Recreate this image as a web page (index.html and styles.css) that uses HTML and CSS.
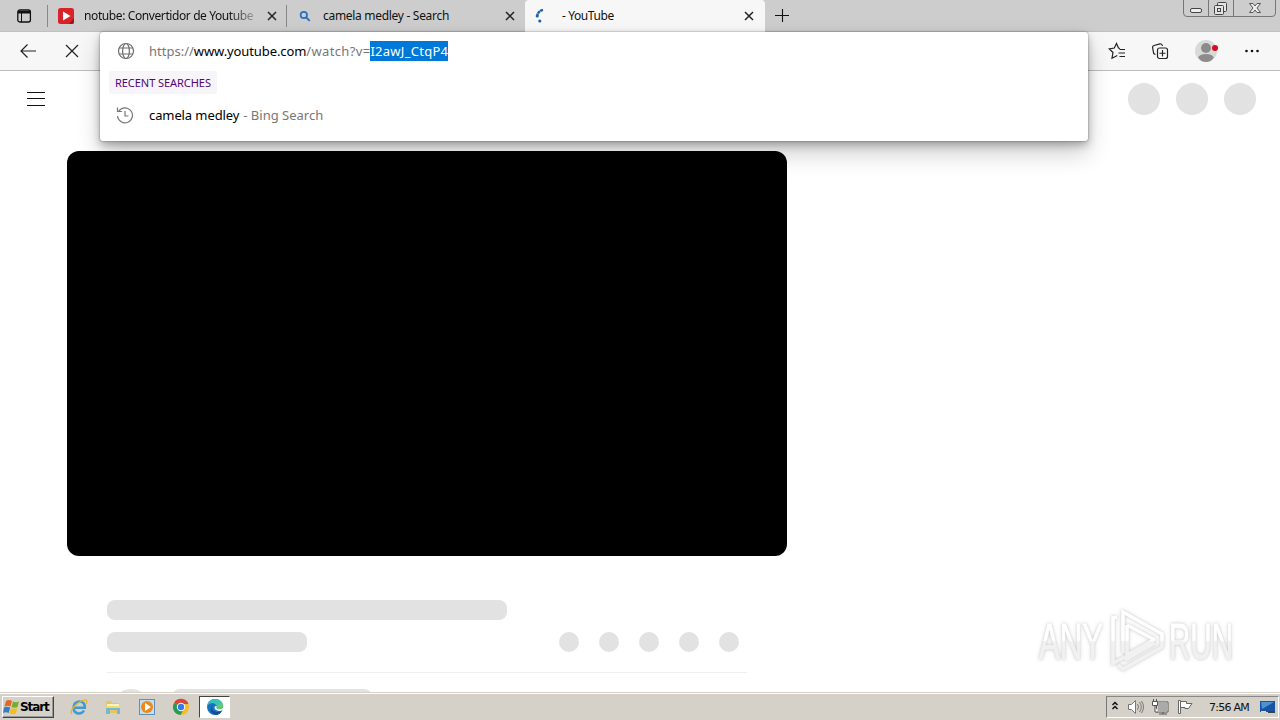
FILE: index.html
```html
<!DOCTYPE html>
<html lang="en">
<head>
<meta charset="utf-8">
<title>YouTube</title>
<link rel="stylesheet" href="styles.css">
</head>
<body>
<div class="screen">
  <header class="tabs">
    <div class="tab-menu"><svg width="16" height="16" viewBox="0 0 16 16"><rect x="1.800" y="2" width="12.600" height="12" rx="2" fill="none" stroke="#111" stroke-width="1.300"/><path d="M2 3h12v2.500H2z" fill="#111"/><path d="M5.500 5v9" stroke="#111"/></svg></div>
    <div class="tab tab-first">
      <svg class="fav" width="16" height="16" viewBox="0 0 16 16"><rect width="16" height="16" rx="2.500" fill="#d9232a"/><path d="M11 16L16 10V14Q16 16 14 16z" fill="#a3131a"/><path d="M5 3.500l7.500 4.500L5 12.500z" fill="#fff"/></svg>
      <span class="title title-fade">notube: Convertidor de Youtube</span>
      <svg class="close" width="10" height="10" viewBox="0 0 10 10"><path d="M1 1l8 8M9 1L1 9"/></svg>
    </div>
    <div class="tab tab-second">
      <svg class="fav" width="16" height="16" viewBox="0 0 16 16"><circle cx="6.800" cy="7" r="3.200" fill="none" stroke="#2870bd" stroke-width="1.700"/><path d="M9.200 9.400l3.500 3.500" stroke="#2870bd" stroke-width="2"/></svg>
      <span class="title title-search">camela medley - Search</span>
      <svg class="close" width="10" height="10" viewBox="0 0 10 10"><path d="M1 1l8 8M9 1L1 9"/></svg>
    </div>
    <div class="tab tab-active">
      <svg class="fav" width="16" height="16" viewBox="0 0 16 16"><path d="M11 1.800Q6 3 5 8.500" fill="none" stroke="#24609f" stroke-width="2.400" stroke-dasharray="3 .4"/><circle cx="5.200" cy="8" r="1.500" fill="#24609f"/><circle cx="7.800" cy="13" r="1.600" fill="#24609f"/></svg>
      <span class="title title-yt">- YouTube</span>
      <svg class="close" width="10" height="10" viewBox="0 0 10 10"><path d="M1 1l8 8M9 1L1 9"/></svg>
    </div>
    <svg class="new-tab" width="16" height="16" viewBox="0 0 16 16"><path d="M1 7.500h14M8.500 1v13" stroke="#111" stroke-width="1.100"/></svg>
    <svg class="window-controls" width="94" height="18" viewBox="0 0 94 18"><path d="M.5 0v13q0 3.500 3.500 3.500h85q3.500 0 3.500-3.500V0M25.500 0v16M50.500 0v16" fill="none" stroke="#777"/><rect x="7.500" y="8.500" width="11" height="4" rx="1.500" fill="#eee" stroke="#444"/><g fill="#e4e4e4" stroke="#444"><rect x="34.500" y="2.500" width="9" height="9" rx="1"/><rect x="31.500" y="5.500" width="9" height="9" rx="1"/><rect x="34.500" y="8.500" width="3" height="3"/></g><path d="M66.500 3.500h3.500l2 2.500 2-2.500h3.500L74 8l3.500 4.500H74L72 10l-2 2.500h-3.500L70 8z" fill="#eee" stroke="#555"/></svg>
  </header>

  <nav class="toolbar">
    <svg class="back" width="18" height="16" viewBox="0 0 18 16"><path d="M17 8H2M8.500 1.500L2 8l6.500 6.500"/></svg>
    <svg class="stop" width="14" height="14" viewBox="0 0 14 14"><path d="M1 1l12 12M13 1L1 13"/></svg>
    <div class="tools">
      <svg width="18" height="18" viewBox="0 0 18 18"><path d="M12 6.500L10.500 6 8.500 1.500 6.300 6 1.200 6.800 5 10.500 4 16.200 9.300 13.500M11.500 7.500H17M10.500 11H17M11.500 14.500H17"/></svg>
      <svg width="18" height="18" viewBox="0 0 18 18"><path d="M4.500 12.500L2.700 11.500 1.600 5.500Q1.300 4 3 3.500L9 1.800Q11 1.500 11.500 4"/><rect x="6.500" y="6" width="10" height="10.500" rx="2"/><path d="M11.500 8v6.500M8.500 11.250h6"/></svg>
      <svg class="avatar" width="24" height="24" viewBox="0 0 24 24"><circle cx="11" cy="12" r="11" fill="#d7dad6"/><circle cx="11" cy="9" r="5" fill="#8c8c8c"/><path d="M3.200 18.500Q4.500 15 11 15t7.800 3.500Q16 23 11 23t-7.800-4.500z" fill="#8c8c8c"/><circle cx="20" cy="9" r="3" fill="#d80c1c"/></svg>
      <svg class="more" width="16" height="6" viewBox="0 0 16 6"><g fill="#111"><circle cx="2.500" cy="3" r="1.300"/><circle cx="8" cy="3" r="1.300"/><circle cx="13.500" cy="3" r="1.300"/></g></svg>
    </div>
  </nav>

  <main class="page">
    <div class="masthead">
      <div class="burger"><i></i><i></i><i></i></div>
      <div class="account"><i></i><i></i><i></i></div>
    </div>
    <div class="video"></div>
    <section class="details">
      <div class="bar bar-title"></div>
      <div class="meta"><div class="bar bar-views"></div><div class="actions"><i></i><i></i><i></i><i></i><i></i></div></div>
      <div class="owner"><i class="owner-pic"></i><i class="owner-name"></i></div>
    </section>
    <svg class="watermark" width="240" height="80" viewBox="0 0 240 80">
      <defs><linearGradient id="fade" gradientUnits="userSpaceOnUse" x1="0" y1="0" x2="0" y2="76"><stop offset="0" stop-color="#fff"/><stop offset=".49" stop-color="#fff"/><stop offset=".51" stop-color="#f1f1f1"/><stop offset="1" stop-color="#f1f1f1"/></linearGradient></defs>
      <g class="mark-text"><text x="8" y="56" textLength="64" lengthAdjust="spacingAndGlyphs">ANY</text><text x="138" y="56" textLength="64" lengthAdjust="spacingAndGlyphs">RUN</text></g>
      <g class="mark-logo"><path d="M86 14L82 15V60l12-6M92 50V9L131 31v5M96 22l28 15M96 22v30l28-16M94 57l30-17M87 62l5 4 39-22V34"/></g>
    </svg>
  </main>

  <footer class="taskbar">
    <div class="start"><svg width="17" height="16" viewBox="0 0 17 16"><path d="M3 2Q6 0 9 2L7.500 7.500Q5 6 1.500 7.500z" fill="#e86524"/><path d="M10 2.500q3 1.500 6 0L14.500 8q-3 1.500-6 0z" fill="#72ae32"/><path d="M1 8.500q3-1.500 6.200 0L5.700 14Q3 12.500 0 14z" fill="#357ec6"/><path d="M8.200 9q3 1.500 6.200 0L13 14.500q-3 1.500-6.500 0z" fill="#f5bd20"/></svg><b>Start</b></div>
    <div class="apps">
      <svg width="18" height="18" viewBox="0 0 18 18"><path d="M14 12.500Q12 16 8 15.500 3.200 14.500 3.500 9.300 4 4 9.300 3.500 15 3.700 14.800 9.800H4" fill="none" stroke="#3e9bd5" stroke-width="2.500"/><path d="M2 16Q-1 13 6 7T16 2q1.500 1 0 4" fill="none" stroke="#e9b72e" stroke-width="1.400"/></svg>
      <svg width="18" height="18" viewBox="0 0 18 18"><path d="M2 3h5l1 2h7v10H2z" fill="#e4c567"/><path d="M3 6h12v5H3z" fill="#fff3b6"/><path d="M2 8h14v8h-3v-4H6v4H2z" fill="#76b9cf"/><path d="M2 8h14v2H2z" fill="#f3d77b"/></svg>
      <svg width="18" height="18" viewBox="0 0 18 18"><rect x="1.500" y="1.500" width="15" height="15" fill="#c2def1" stroke="#5b91bb"/><circle cx="9" cy="9" r="6" fill="#ef8719"/><path d="M7 5l6 4-6 4z" fill="#fff"/></svg>
      <svg width="18" height="18" viewBox="0 0 18 18"><circle cx="9" cy="9" r="8" fill="#f1be2d"/><path d="M9 9L2 5A8 8 0 0 1 16.500 6H9z" fill="#db4437"/><path d="M2 5A8 8 0 0 0 8.500 17L12 11 9 9z" fill="#289b56"/><circle cx="9" cy="9" r="4.200" fill="#fff"/><circle cx="9" cy="9" r="3.200" fill="#367be8"/></svg>
      <div class="app-active"><svg width="18" height="18" viewBox="0 0 18 18"><circle cx="9" cy="9" r="8" fill="#1672bd"/><path d="M1.200 8Q3 1 9 1q7.500.5 8 7-.5 4-5 3-2-.5-1-2.500Q10 5.500 7 5 3 5 1.200 8z" fill="#36c3bd"/><path d="M10 1q7 1 7 7-.5 4-5 3-2-.5-1-2.500L16 4z" fill="#67c96b"/><path d="M6 7q-2 6 5 7 3 0 5-1.500-1.500 4-6 4.500Q2 15 6 7z" fill="#124f97"/><path d="M9 8q-2 4 4 5 2 0 4-1.500V10q-2 2-6 .7Q9.500 10 11 8.500z" fill="#fff"/></svg></div>
    </div>
    <div class="tray">
      <svg width="8" height="12" viewBox="0 0 8 12"><path d="M1.500 4l2.500-2.500L6.500 4M1.500 8l2.500-2.500L6.500 8" fill="none" stroke="#111" stroke-width="1.500"/></svg>
      <svg width="17" height="16" viewBox="0 0 17 16"><path d="M1.500 5.500h3l4-4v13l-4-4h-3z" fill="#fff" stroke="#777"/><path d="M10.500 5q2 3 0 6M12.500 3q3.500 5 0 10M14.500 2q4 6 0 12" fill="none" stroke="#777"/></svg>
      <svg width="17" height="16" viewBox="0 0 17 16"><rect x="5" y="3.500" width="10.500" height="9" fill="#aaa" stroke="#fff"/><path d="M4.500 3v10h11.500V3z" fill="none" stroke="#555"/><path d="M7 15h8M11 13v2" stroke="#555"/><path d="M.5 2.500h5v4h-5zM1.500 0v3M4.500 0v3M3 7v6h3" fill="#fff" stroke="#555"/></svg>
      <svg width="17" height="16" viewBox="0 0 17 16"><path d="M1.500 1.500h2v13h-2z" fill="#fff" stroke="#666"/><path d="M3.500 2.500h6v2h5.500l-3.500 5h-3.500v-1H3.500z" fill="#fff" stroke="#666"/></svg>
      <span class="clock">7:56 AM</span>
      <svg width="16" height="14" viewBox="0 0 16 14"><path d="M0 1h15v11H0z" fill="#1953a3"/><path d="M1 2h13L2 9z" fill="#4a93d7"/><path d="M1 11.500h5" stroke="#cde"/><path d="M8 12h7" stroke="#345" stroke-width="2"/></svg>
    </div>
  </footer>

  <div class="omnibox">
    <div class="address"><svg width="18" height="18" viewBox="0 0 18 18"><g fill="none" stroke="#6d6d6d" stroke-width="1.200"><circle cx="9" cy="9" r="7.500"/><ellipse cx="9" cy="9" rx="3.400" ry="7.500"/><path d="M2.200 6h13.600M2.200 12h13.600"/></g></svg><div class="url"><span class="scheme">https://</span><span class="host">www.youtube.com</span><span class="path">/watch?v=</span><span class="selected">I2awJ_CtqP4</span></div></div>
    <div class="heading"><span>RECENT SEARCHES</span></div>
    <div class="suggestion"><svg width="18" height="18" viewBox="0 0 18 18"><path d="M2.500 5.500A7.500 7.500 0 1 1 1.500 10M1.500 1.500v4H6M9 5v5h3.500" fill="none" stroke="#777" stroke-width="1.200"/></svg><span class="query">camela medley</span><span class="source">- Bing Search</span></div>
  </div>
</div>
</body>
</html>
```
FILE: styles.css
```css
* { box-sizing: border-box; }
body { margin: 0; font-family: "Noto Sans", "Open Sans", sans-serif; font-size: 12px; color: #111; }
svg, i { display: block; flex-shrink: 0; }
span { white-space: nowrap; }
.screen { position: relative; width: 1280px; height: 720px; overflow: hidden; display: flex; flex-direction: column; background: #fff; }
.tabs { height: 32px; display: flex; background: #cdcdcd; border-bottom: 1px solid #c0c0c0; flex-shrink: 0; }
.tab-menu { width: 48px; padding: 8px 0 0 16px; }
.tab { height: 32px; display: flex; align-items: center; }
.tab-first, .tab-second { width: 239px; padding-left: 10px; border-left: 1px solid; border-image: linear-gradient(transparent 6px, #888 6px, #888 26px, transparent 26px) 1; }
.tab-first { margin-left: -1px; }
.tab-active { width: 240px; background: #f7f7f7; border-radius: 4px 4px 0 0; padding-left: 7px; }
.title { margin-left: 10px; width: 170px; line-height: 18px; overflow: hidden; }
.title-fade { letter-spacing: -.4px; -webkit-mask-image: linear-gradient(90deg, #000 85%, #0004); }
.title-search { letter-spacing: -.3px; }
.title-yt { margin-left: 14px; letter-spacing: -.4px; }
.close { margin-left: auto; margin-right: 10px; fill: none; stroke: #222; stroke-width: 1.5; }
.tab-first .close { margin-right: 9px; }
.tab-active .close { margin-right: 11px; }
.new-tab { margin: 8px 0 0 9px; }
.window-controls { margin-left: auto; margin-right: 3px; }
.toolbar { height: 39px; background: #f7f7f7; border-bottom: 1px solid #bdbdbd; display: flex; align-items: center; padding-left: 19px; flex-shrink: 0; }
.back, .stop { fill: none; stroke: #222; stroke-width: 1.2; }
.stop { margin-left: 28px; }
.tools { margin-left: auto; display: flex; align-items: center; gap: 26px; padding-right: 20px; fill: none; stroke: #222; stroke-width: 1.2; }
.tools > svg:first-child { margin-right: -1px; }
.avatar { margin-right: -1px; stroke: none; }
.more { stroke: none; }
.page { flex: 1; position: relative; overflow: hidden; padding-left: 67px; background: #fff; }
.masthead { display: flex; justify-content: space-between; margin-left: -40px; padding: 12px 24px 0 0; height: 80px; }
.burger { width: 18px; padding-top: 9px; display: flex; flex-direction: column; gap: 5.4px; }
.burger i { height: 1px; background: #111; }
.account { display: flex; gap: 16px; }
.account i { width: 32px; height: 32px; border-radius: 50%; background: #e2e2e2; }
.video { width: 720px; height: 405px; border-radius: 12px; background: #000; }
.details { width: 640px; margin: 44px 0 0 40px; }
.bar { height: 20px; border-radius: 8px; background: #e2e2e2; }
.bar-title { width: 400px; }
.bar-views { width: 200px; }
.meta { display: flex; justify-content: space-between; margin-top: 12px; padding: 0 8px 20px 0; border-bottom: 1px solid #eee; }
.actions { display: flex; gap: 20px; }
.actions i { width: 20px; height: 20px; border-radius: 50%; background: #e2e2e2; }
.owner { display: flex; padding: 16px 0 0 4px; gap: 21px; }
.owner-pic { width: 40px; height: 40px; border-radius: 50%; background: #e2e2e2; }
.owner-name { width: 200px; height: 20px; border-radius: 8px; background: #e2e2e2; }
.watermark { position: absolute; left: 1031px; top: 532px; filter: drop-shadow(0 0 2px #0002) drop-shadow(0 0 1px #0002); }
.mark-text { font: 50px "Liberation Sans", sans-serif; fill: url(#fade); stroke: url(#fade); stroke-width: .8; }
.mark-logo { fill: none; stroke: url(#fade); stroke-width: 3.6; }
.taskbar { height: 28px; flex-shrink: 0; background: #d5d0c8; border-top: 1px solid #d5d0c8; box-shadow: inset 0 1px #fff; display: flex; align-items: center; }
.start { width: 52px; height: 22px; margin: 1px 0 0 2px; border: 1px solid; border-color: #fff #444 #444 #fff; box-shadow: inset -1px -1px #999; display: flex; align-items: center; }
.start b { font: bold 12px "DejaVu Sans", sans-serif; letter-spacing: -1.1px; color: #000; }
.apps { display: flex; align-items: center; gap: 16px; margin: 1px 0 0 16px; }
.app-active { width: 31px; height: 22px; padding: 1px 0 0 6px; background: #fff; border: 1px solid; border-color: #444 #fff #fff #444; margin-left: -7px; }
.tray { width: 173px; height: 22px; margin: 1px 1px 0 auto; border: 1px solid; border-color: #888 #fff #fff #777; display: flex; align-items: center; padding-left: 4px; gap: 8px; }
.clock { margin-left: 7px; font: 11px "DejaVu Sans", sans-serif; letter-spacing: -.75px; width: 43px; }
.omnibox { position: absolute; left: 100px; top: 32px; width: 988px; height: 109px; background: #fff; border-radius: 3px; box-shadow: 0 0 2px #0007, 0 4px 8px #0004, 0 12px 24px #0003; }
.address { display: flex; align-items: center; height: 38px; padding-left: 17px; }
.url { margin-left: 14px; display: flex; font-size: 13px; line-height: 20px; }
.scheme, .path, .source { color: #777; }
.host, .query { color: #000; }
.host { letter-spacing: -.1px; }
.path { letter-spacing: .35px; }
.selected { color: #fff; background: #0078d7; letter-spacing: .27px; }
.heading { padding: 1px 0 0 9px; }
.heading span { display: block; width: 108px; height: 23px; padding-left: 6px; background: #f7f5fa; color: #500778; font-size: 11px; line-height: 23px; letter-spacing: -.05px; border-radius: 2px; }
.suggestion { display: flex; align-items: center; height: 41px; padding-left: 16px; font-size: 13px; }
.query { margin-left: 15px; letter-spacing: -.1px; }
.source { margin-left: 4px; }
```
